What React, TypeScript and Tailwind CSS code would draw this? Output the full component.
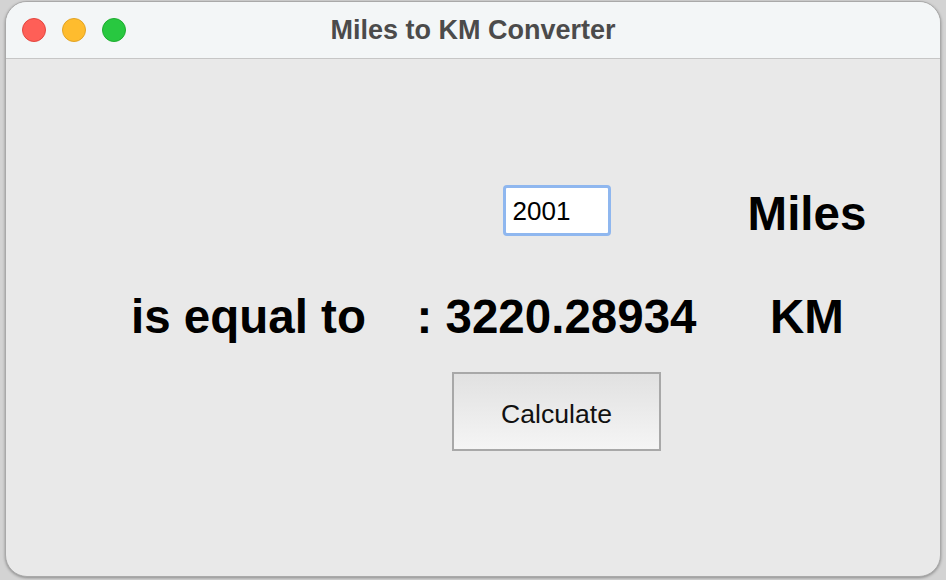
import React from 'react'

const TrafficLights = () => (
    <div className="flex items-center gap-[16px] pl-[16px]">
        <div className="w-[24px] h-[24px] rounded-full bg-[#fe5f57] border border-[#e2463f]" />
        <div className="w-[24px] h-[24px] rounded-full bg-[#febc2e] border border-[#e1a325]" />
        <div className="w-[24px] h-[24px] rounded-full bg-[#28c840] border border-[#1eac2f]" />
    </div>
)

const App = () => {
    const miles = 2001
    const km = (miles * 1.60934).toFixed(5)

    return (
        <div
            className="w-[946px] h-[580px] overflow-hidden bg-[#d3d3d3] pl-[5px] pt-[1px]"
            style={{ fontFamily: '"Liberation Sans", Arial, sans-serif' }}
        >
            <div className="w-[936px] h-[576px] rounded-[22px] border border-[#a9a9a9] bg-[#e9e9e9] overflow-hidden shadow-[0_1px_3px_rgba(0,0,0,0.35)] flex flex-col">
                {/* title bar */}
                <div className="h-[57px] shrink-0 bg-[#f3f6f7] border-b border-[#c6c6c6] grid grid-cols-[1fr_auto_1fr] items-center">
                    <TrafficLights />
                    <span className="text-[27px] font-bold text-[#4b4b4b] leading-none">
                        Miles to KM Converter
                    </span>
                    <div />
                </div>

                {/* form */}
                <div className="pt-[121px] pl-[105px] grid grid-cols-[275px_341px_160px] grid-rows-[60px_105px_auto] text-black">
                    <div />
                    <div className="flex justify-center items-center">
                        <input
                            readOnly
                            value={miles}
                            className="w-[108px] h-[51px] border-[3px] border-[#8fb7ef] rounded-[4px] bg-white pl-[7px] pt-[3px] text-[26px] text-black outline-none"
                        />
                    </div>
                    <div className="flex justify-center items-end pb-[3px]">
                        <span className="text-[47.5px] leading-[47px] font-bold">Miles</span>
                    </div>

                    <div className="flex justify-center items-end pb-[5px]">
                        <span className="text-[47.5px] leading-[47px] font-bold whitespace-nowrap">is equal to</span>
                    </div>
                    <div className="flex justify-center items-end pb-[5px]">
                        <span className="text-[47.5px] leading-[47px] font-bold whitespace-nowrap">: {km}</span>
                    </div>
                    <div className="flex justify-center items-end pb-[5px]">
                        <span className="text-[47.5px] leading-[47px] font-bold">KM</span>
                    </div>

                    <div />
                    <div className="flex justify-center pt-[27px]">
                        <button className="w-[209px] h-[79px] border-2 border-[#a8a8a8] bg-gradient-to-b from-[#e1e1e1] to-[#f5f5f5] pt-[7px] text-[26.6px] text-[#111]">
                            Calculate
                        </button>
                    </div>
                    <div />
                </div>
            </div>
        </div>
    )
}

export default App
